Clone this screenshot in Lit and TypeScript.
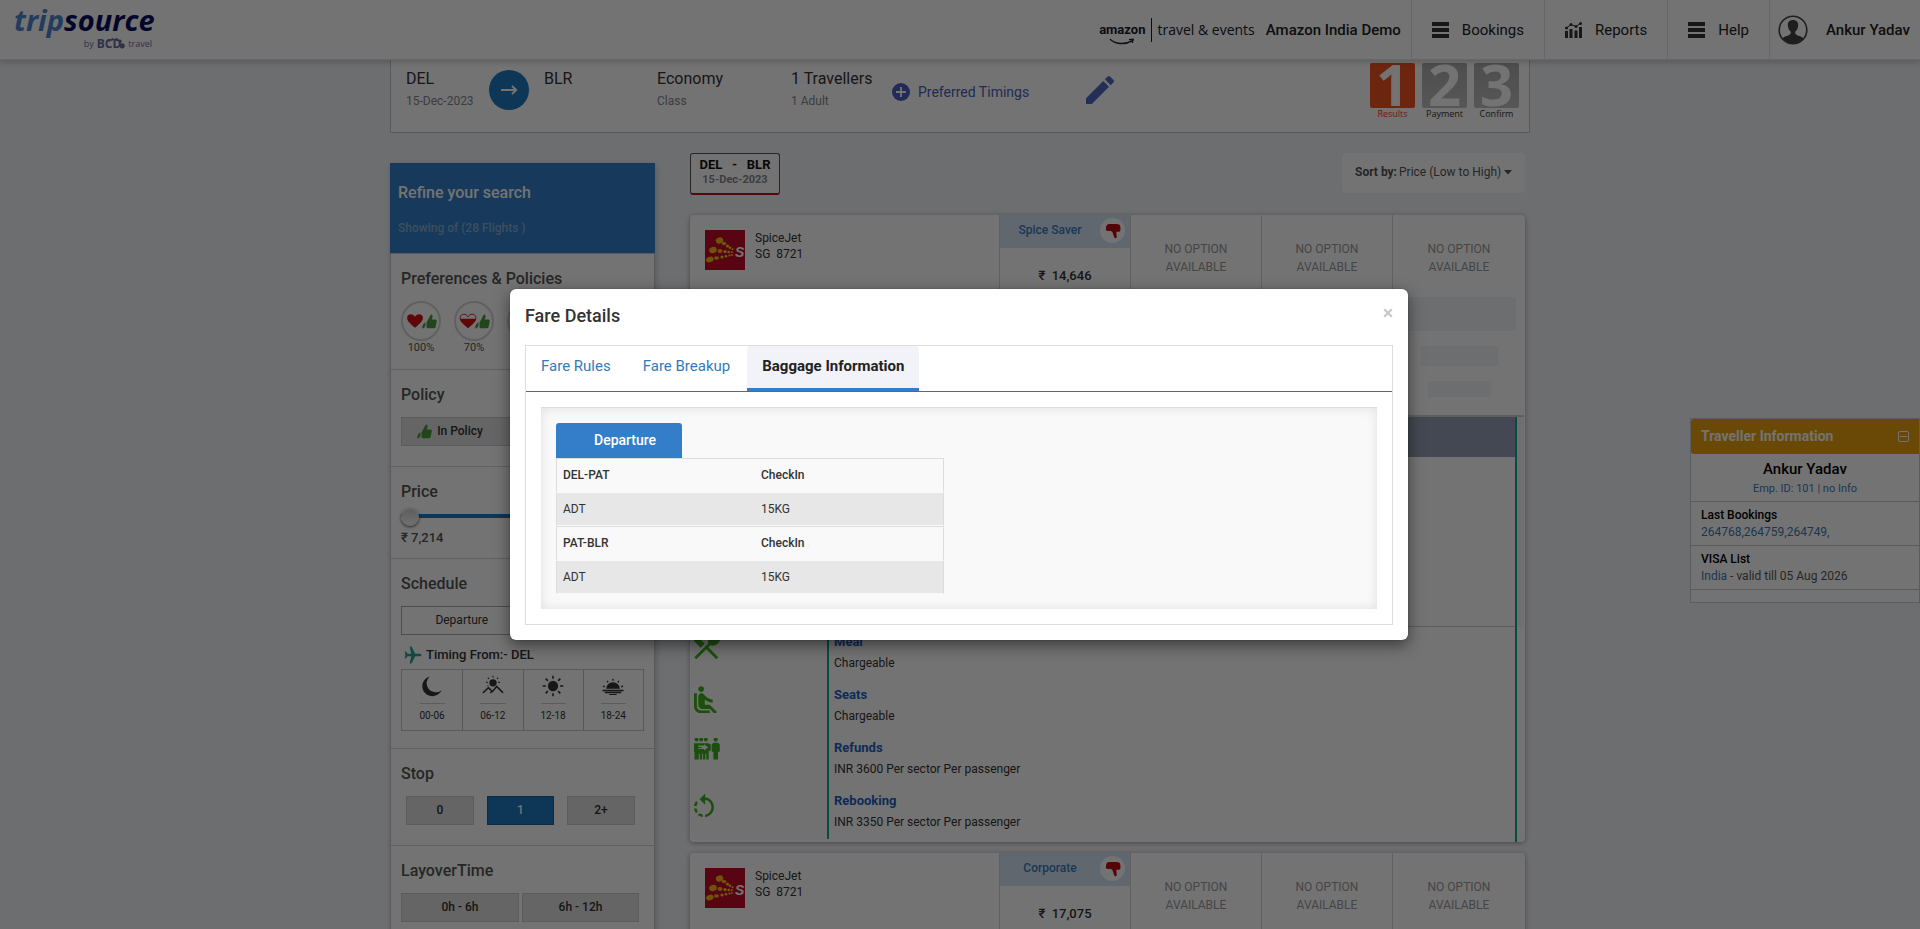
import { LitElement, html, css, svg, nothing } from "lit";
import { customElement, state } from "lit/decorators.js";
import { classMap } from "lit/directives/class-map.js";

const thumbShape = svg`
  <path d="M9 11.5 13 4q.8-2.8 2.6-2 1.600.8 1 3.400L15.400 9H21q1.900.3 1.700 2L21 19.500q-.5 2-2.500 2H11q-2 0-3-1.200V13z"/>
  <path d="M6.500 13q-4.500 2.200-4.800 8.500h3.200q-.6-2.200 1.600-3.200z"/>`;

const thumbUp = html`<svg class="ic" viewBox="1.5 1.5 21.500 20.500" aria-hidden="true">${thumbShape}</svg>`;
const thumbDown = html`<svg class="ic" viewBox="0 0 24 24" aria-hidden="true">
  <path d="M4 3.500Q5 2.500 8 2.500h8q3.500 0 5 1.500.9 1 .9 4v3q-.2 1.600-2 2h-3.500l.6 6.500q-.2 2.300-2.200 2-1.300-.3-1.800-2.800L11.500 14 9 11.500Q4.500 12.500 2.500 11 1.800 7 4 3.500z"/>
</svg>`;

const heartPath = "M12 21C5 15.500 1.500 12 1.500 7.800 1.500 4.800 3.800 3 6.500 3 9 3 11 4.300 12 6.500 13 4.300 15 3 17.500 3c2.700 0 5 1.800 5 4.800C22.500 12 19 15.500 12 21z";
const heartFull = html`<svg class="heart" viewBox="0 0 24 24" aria-hidden="true"><path d=${heartPath}/></svg>`;
const heartPart = html`<svg class="heart" viewBox="0 0 24 24" aria-hidden="true">
  <path d=${heartPath} fill="none" stroke="currentColor" stroke-width="1.200"/>
  <path d="M1.500 9h21C22 13 18 16.500 12 21 6 16.500 2 13 1.500 9z"/>
</svg>`;

const bars = html`<svg class="nav-ic" viewBox="0 0 17 16" aria-hidden="true">
  <path d="M0 0h17v4H0zM0 6h17v4H0zM0 12h17v4H0z"/></svg>`;
const chart = html`<svg class="nav-ic" viewBox="0 0 17 16" aria-hidden="true">
  <path d="M0 9h3v7H0zM4.500 7h3v9h-3zM9.500 8.500h3V16h-3zM14 5h3v11h-3z"/>
  <path d="M1.500 6 6 2.500l5 2L15.500 1.200" fill="none" stroke="currentColor"/>
  <circle cx="1.500" cy="6" r="1.500"/><circle cx="6" cy="2.600" r="1.500"/><circle cx="11" cy="4.600" r="1.500"/><circle cx="15.500" cy="1.500" r="1.500"/>
</svg>`;
const avatar = html`<svg class="avatar" viewBox="0 0 30 30" aria-hidden="true">
  <defs><clipPath id="face"><circle cx="15" cy="15" r="13.500"/></clipPath></defs>
  <circle cx="15" cy="15" r="13.800" fill="none" stroke="currentColor" stroke-width="1.600"/>
  <g clip-path="url(#face)"><path d="M15 5c-3.600 0-5.400 2.400-5.200 5.600.2 2.800 1.400 5 3 6.200 0 2-.3 2.600-2 3.400-3 1.200-6.500 2-7.800 5V30h24v-4.800c-1.300-3-4.800-3.800-7.800-5-1.700-.8-2-1.400-2-3.400 1.600-1.200 2.800-3.400 3-6.200C20.400 7.400 18.600 5 15 5z"/></g>
</svg>`;

const pencil = html`<svg class="pencil" viewBox="3 3 18 18" aria-hidden="true">
  <path d="M3 17.250V21h3.750L17.810 9.940l-3.750-3.750L3 17.250zM20.710 7.040c.39-.39.39-1.020 0-1.410l-2.340-2.340c-.39-.39-1.020-.39-1.410 0l-1.830 1.830 3.750 3.750 1.830-1.830z"/></svg>`;

const plane = html`<svg class="plane" viewBox="0 0 18 18" aria-hidden="true">
  <path d="M17.500 9c0 .9-1 1.300-2 1.300h-4.300L7.500 17.500H5.600l1.700-7.200H3.600L2 12.500H.7L1.400 9 .7 5.500H2l1.600 2.200h3.700L5.600.5h1.900l3.700 7.200h4.300c1 0 2 .4 2 1.300z"/></svg>`;

const moon = svg`<path d="M9.500 1.500A9 9 0 0 0 22.500 16.500 11 11 0 1 1 9.500 1.500z"/>`;
const mountain = svg`<circle cx="12" cy="8.500" r="4"/>
  <path d="M12 .8v2M6.300 3l1.300 1.300M17.700 3l-1.300 1.300M4.500 8h1.800M17.700 8h1.800M6 12.300l1-.6" fill="none" stroke="currentColor" stroke-width="1.200"/>
  <path d="M1 19.500 7 14l4.500 4 4.500-5.500 7 7M9 19.500l2.500-2" fill="none" stroke="currentColor" stroke-width="1.600"/>`;
const sun = svg`<circle cx="12" cy="12" r="5.600"/>
  <path d="M12 .8v3.400M12 19.800v3.400M.8 12h3.400M19.800 12h3.400M4 4l2.400 2.400M17.600 17.600 20 20M20 4l-2.400 2.400M6.400 17.600 4 20" fill="none" stroke="currentColor" stroke-width="1.700"/>`;
const sunset = svg`<path d="M4.500 15a7.500 7 0 0 1 15 0zM.5 16.200h23v1.400H.5zM3 18.400h18v1.400H3zM8 20.600h8v1.200H8z"/>
  <path d="M12 4v2.200M5.500 6.500l1.300 1.500M18.500 6.500 17.200 8M1 12.200l2 .6M23 12.200l-2 .6" fill="none" stroke="currentColor" stroke-width="1.500"/>`;

const spicejet = html`<svg class="airline" viewBox="0 0 40 40" role="img" aria-label="SpiceJet">
  <rect width="40" height="40" fill="#c30c2c"/>
  <g fill="#f9b517">
    <ellipse cx="14.500" cy="10.500" rx="3.800" ry="3" transform="rotate(-25 14.500 10.500)"/>
    <ellipse cx="8" cy="20" rx="3.900" ry="3.100" transform="rotate(-15 8 20)"/>
    <ellipse cx="4.800" cy="29.500" rx="3.900" ry="2.700" transform="rotate(-20 4.800 29.500)"/>
    <ellipse cx="19" cy="13.500" rx="2.300" ry="1.800"/><ellipse cx="15" cy="21" rx="2.500" ry="1.900"/><ellipse cx="11.500" cy="28" rx="2.500" ry="1.700"/>
  </g>
  <g fill="#f5d51a">
    <circle cx="22.500" cy="16" r="1.600"/><circle cx="25" cy="17.800" r="1.300"/><circle cx="27.500" cy="19.300" r="1"/>
    <circle cx="20" cy="21.600" r="1.600"/><circle cx="23.700" cy="22" r="1.300"/><circle cx="26.800" cy="22.200" r="1"/>
    <circle cx="17" cy="27" r="1.500"/><circle cx="21" cy="26.200" r="1.300"/><circle cx="24.500" cy="25.500" r="1.100"/><circle cx="27" cy="25" r=".9"/>
  </g>
  <text x="30" y="27" class="s-mark">S</text>
</svg>`;

const meal = svg`<path d="M8.100 13.340l2.830-2.830L3.910 3.500c-1.560 1.560-1.560 4.090 0 5.660l4.190 4.180zm6.780-1.810c1.530.71 3.680.21 5.270-1.380 1.910-1.910 2.280-4.650.81-6.120-1.460-1.460-4.200-1.100-6.120.81-1.590 1.590-2.090 3.740-1.380 5.270L3.700 19.870l1.410 1.410L12 14.410l6.880 6.880 1.410-1.410L13.410 13l1.470-1.470z"/>`;
const seat = svg`<path d="M7.590 5.410c-.78-.78-.78-2.050 0-2.830.78-.78 2.050-.78 2.830 0 .78.78.78 2.050 0 2.830-.79.79-2.050.79-2.830 0zM6 16V7H4v9c0 2.760 2.240 5 5 5h6v-2H9c-1.660 0-3-1.340-3-3zm14 4.070L14.930 15H11.500v-3.680c1.400 1.150 3.600 2.160 5.500 2.160v-2.160c-1.660.02-3.610-.87-4.670-2.040l-1.400-1.550c-.19-.21-.43-.38-.69-.5-.29-.14-.62-.23-.96-.23h-.03C8.010 7 7 8.010 7 9.250V15c0 1.660 1.340 3 3 3h5.070l3.500 3.500L20 20.070z"/>`;
const refund = svg`<circle cx="3" cy="3.800" r="1.700"/><circle cx="7" cy="3.800" r="1.700"/><circle cx="11" cy="3.800" r="1.700"/><circle cx="19.500" cy="3.800" r="1.800"/>
  <path d="M.8 7h12.400l2 1v5l-1.800 1V21h-2v-5h-.8v5h-2v-5h-.8v5h-2v-5H5v5H1.200v-6.500l-.4-.8z"/>
  <path d="M4.500 9h5V7.800l3.500 2.700-3.500 2.700V12h-5v-1h3v-.8h-3z" fill="#fafafa"/>
  <path d="M17.500 6.500h4L23 8v6l-1.500.5V21h-4v-6.500L16 14V8z"/>`;
const rotate = svg`<path d="M7.110 8.530L5.700 7.110C4.800 8.270 4.240 9.610 4.070 11h2.020c.14-.87.49-1.720 1.020-2.470zM6.090 13H4.070c.17 1.390.72 2.730 1.620 3.890l1.410-1.420c-.52-.75-.87-1.590-1.010-2.470zm1.010 5.320c1.160.9 2.510 1.440 3.900 1.610V17.900c-.87-.15-1.710-.49-2.460-1.030L7.100 18.320zM13 4.070V1L8.450 5.550 13 10V6.090c2.840.48 5 2.940 5 5.910s-2.160 5.430-5 5.910v2.020c3.950-.49 7-3.850 7-7.930s-3.050-7.440-7-7.930z"/>`;

const reset = css`
  *, *::before, *::after { box-sizing: border-box; }
  button, input, select { font: inherit; color: inherit; margin: 0; border-radius: 0; }
  button { padding: 0; border: 0; background: none; cursor: pointer; }
  a { color: inherit; text-decoration: none; }
  h1, h2, h3, h4, p, ul, dl, dd { margin: 0; padding: 0; }
  svg { display: block; fill: currentColor; }
`;

@customElement("site-header")
export class SiteHeader extends LitElement {
  static styles = [reset, css`
    :host { display: flex; align-items: stretch; height: 60px; flex: none; position: relative; z-index: 2;
      background: #fff; border-bottom: 1px solid #e4e5ea; box-shadow: 0 2px 6px rgba(0,0,0,.2); color: #222; font-size: 15px; }
    .logo { margin: 2px auto 0 14px; display: flex; flex-direction: column; width: 142px; font-family: "Open Sans", sans-serif; }
    .word { font-size: 29px; line-height: 36px; font-style: italic; font-weight: 700; color: #080d5c; }
    .word span { color: #4b86cf; }
    .by { display: flex; justify-content: flex-end; align-items: center; gap: 3px; padding-right: 4px; font-size: 9px; line-height: 12px; color: #6a6aa0; }
    .by b { font-size: 12px; }
    .by svg { width: 18px; height: 12px; margin-left: -17px; }
    .partner { display: flex; align-items: center; gap: 6px; margin-right: 11px; color: #17202b; }
    .amazon { display: flex; flex-direction: column; font-weight: 700; font-size: 13px; line-height: 16px; padding-top: 8px; }
    .amazon svg { width: 26px; height: 7px; margin: 0 auto; fill: none; stroke: currentColor; }
    .te { border-left: 1px solid #17202b; padding-left: 5px; font-family: "Open Sans", sans-serif; font-size: 14px; line-height: 24px; }
    .company { display: flex; align-items: center; padding-right: 10px; font-size: 15px; font-weight: 500; }
    nav { display: flex; }
    .item { display: flex; align-items: center; gap: 13px; padding: 0 20px; border-left: 1px solid #e2e2e2; }
    .nav-ic { width: 17px; height: 16px; color: #333; }
    .user { display: flex; align-items: center; gap: 18px; padding: 0 10px 0 8px; border-left: 1px solid #e2e2e2; font-weight: 500; }
    .avatar { width: 30px; height: 30px; color: #444; }
  `];
  render() {
    return html`
      <a class="logo" href="#" aria-label="tripsource by BCD travel">
        <span class="word"><span>trip</span>source</span>
        <span class="by">by <b>BCD</b><svg viewBox="0 0 18 12"><circle cx="2" cy="2.800" r="1.100"/><circle cx="5.500" cy="1.300" r="1.200"/><circle cx="9.500" cy="1.400" r="1.400"/><circle cx="13" cy="3.200" r="1.600"/><circle cx="15.200" cy="7.800" r="2.600"/></svg>travel</span>
      </a>
      <div class="partner">
        <span class="amazon">amazon<svg viewBox="0 0 28 7"><path d="M1 1c7 6 17 6 24 1.500M21.500 1.500 26 1l-1 4" stroke-width="1.500"/></svg></span>
        <span class="te">travel &amp; events</span>
      </div>
      <div class="company">Amazon India Demo</div>
      <nav>
        <a class="item" href="#">${bars}Bookings</a>
        <a class="item" href="#">${chart}Reports</a>
        <a class="item" href="#">${bars}Help</a>
        <a class="user" href="#">${avatar}Ankur Yadav</a>
      </nav>`;
  }
}

@customElement("search-summary")
export class SearchSummary extends LitElement {
  static styles = [reset, css`
    :host { display: flex; height: 73px; padding: 0 10px 0 15px; background: #fff; border: 1px solid #c4c5c9; border-top: 0; color: #333; }
    .cell { display: flex; flex-direction: column; gap: 4px; padding-top: 9px; }
    .cell b { font-weight: 400; font-size: 16px; line-height: 20px; }
    .cell span { font-size: 12px; line-height: 16px; color: #888; }
    .from { width: 83px; } .to { width: 113px; } .cabin { width: 134px; } .pax { width: 101px; }
    .go { width: 40px; height: 40px; margin: 10px 15px 0 0; border-radius: 50%; background: #2079be; color: #fff; display: grid; place-items: center; }
    .go svg { width: 18px; height: 12px; }
    .timings { display: flex; align-items: center; gap: 8px; height: 20px; margin: 22px 57px 0 0; color: #4a60bd; font-size: 14px; }
    .timings svg { width: 18px; height: 18px; }
    .edit { height: 30px; margin-top: 15px; color: #5068c2; }
    .pencil { width: 28px; height: 28px; }
    ol { display: flex; gap: 7px; list-style: none; margin: 3px 0 0 auto; padding: 0; font-family: "Open Sans", sans-serif; }
    li { width: 45px; display: flex; flex-direction: column; align-items: center; font-size: 9px; line-height: 12px; color: #333; }
    .num { align-self: stretch; height: 45px; overflow: hidden; border-radius: 2px; background: linear-gradient(#acacac, #c0c0c0); color: #fff; font-size: 58px; line-height: 41px; font-weight: 700; text-align: center; }
    .on { color: #e8401c; }
    .on .num { background: #f0531f; }
  `];
  render() {
    return html`
      <div class="cell from"><b>DEL</b><span>15-Dec-2023</span></div>
      <div class="go"><svg viewBox="0 0 18 12"><path d="M1 6h15M12 2l4.200 4L12 10" fill="none" stroke="currentColor" stroke-width="2"/></svg></div>
      <div class="cell to"><b>BLR</b></div>
      <div class="cell cabin"><b>Economy</b><span>Class</span></div>
      <div class="cell pax"><b>1 Travellers</b><span>1 Adult</span></div>
      <button class="timings"><svg viewBox="0 0 18 18"><circle cx="9" cy="9" r="9"/><path d="M9 4v10M4 9h10" stroke="#fff" stroke-width="1.800"/></svg>Preferred Timings</button>
      <button class="edit" aria-label="Edit search">${pencil}</button>
      <ol>
        ${["Results", "Payment", "Confirm"].map((name, i) => html`
          <li class=${classMap({ on: i === 0 })}><span class="num">${i + 1}</span>${name}</li>`)}
      </ol>`;
  }
}

@customElement("filter-panel")
export class FilterPanel extends LitElement {
  @state() stop = "1";
  static styles = [reset, css`
    :host { display: block; width: 265px; flex: none; color: #555; font-size: 12px; box-shadow: 1px 2px 6px rgba(0,0,0,.2); }
    .head { height: 90px; padding: 20px 8px 0; background: #347ec9; color: #fff; }
    .head h2 { font-size: 16px; line-height: 20px; font-weight: 500; }
    .head p { margin-top: 17px; line-height: 16px; font-weight: 500; color: #85b0d5; }
    .body { background: #fff; border: 1px solid #c9cacf; }
    section { padding: 15px 10px 20px; border-bottom: 1px solid #d6d6d6; }
    h3 { font-size: 16px; line-height: 20px; font-weight: 500; margin-bottom: 12px; color: #555; }
    .prefs { display: flex; gap: 13px; margin-bottom: -6px; }
    .pref { display: flex; flex-direction: column; align-items: center; font-size: 11px; line-height: 14px; }
    .ring { width: 40px; height: 40px; border: 2px solid #d5d5d5; border-radius: 50%; display: flex; align-items: center; justify-content: center; }
    .heart { width: 18px; height: 18px; color: #d40f14; }
    .pref .ic { margin-left: -2px; }
    .ic { width: 15px; height: 15px; color: #4f9a3c; }
    .box { display: flex; align-items: center; justify-content: center; gap: 5px; height: 29px; padding-bottom: 1px; background: #dfdfdf; border: 1px solid #ccc; color: #333; font-weight: 500; }
    .inpolicy { width: 118px; padding-right: 20px; }
    .price { padding-bottom: 10px; }
    .price h3 { margin-bottom: 6px; }
    input[type=range] { appearance: none; display: block; width: 100%; height: 18px; background: linear-gradient(#2079be, #2079be) 0 6px / 100% 4px no-repeat; }
    input::-webkit-slider-thumb { appearance: none; width: 18px; height: 18px; border-radius: 50%; background: linear-gradient(#cfcfcf, #f8f8f8); border: 1px solid #eee; box-shadow: 0 1px 3px rgba(0,0,0,.7); }
    .price output { display: block; margin-top: 2px; font-size: 13px; line-height: 20px; font-weight: 500; }
    .sched { padding-bottom: 17px; }
    .dirs { display: grid; grid-template-columns: 1fr 1fr; }
    .dirs .box { background: none; border-color: #aaa; font-weight: 400; }
    .dirs .box + .box { border-left: 0; }
    .timing { display: flex; align-items: center; gap: 4px; margin: 10px 0 4px 3px; font-size: 13px; line-height: 20px; font-weight: 500; color: #333; }
    .plane { width: 18px; height: 18px; color: #2ba195; }
    .slots { display: grid; grid-template-columns: repeat(4, 1fr); height: 62px; border: 1px solid #c8c8c8; }
    .slot { display: flex; flex-direction: column; align-items: center; padding-top: 5px; font-size: 10px; line-height: 12px; color: #333; }
    .slot + .slot { border-left: 1px solid #c0c0c0; }
    .slot svg { width: 22px; height: 22px; }
    .slot span { margin-top: 6px; padding-top: 6px; border-top: 1px solid #ccc; }
    .stops { display: grid; grid-template-columns: 68px 67px 68px; gap: 13px; margin-left: 5px; }
    .stops .on { background: #2079be; border-color: #17639e; color: #fff; }
    .lay { display: grid; grid-template-columns: 118px 117px; gap: 3px; }
  `];
  render() {
    const slots: [unknown, string][] = [[moon, "00-06"], [mountain, "06-12"], [sun, "12-18"], [sunset, "18-24"]];
    return html`
      <div class="head"><h2>Refine your search</h2><p>Showing of (28 Flights )</p></div>
      <div class="body">
        <section>
          <h3>Preferences &amp; Policies</h3>
          <div class="prefs">
            <button class="pref"><span class="ring">${heartFull}${thumbUp}</span>100%</button>
            <button class="pref"><span class="ring">${heartPart}${thumbUp}</span>70%</button>
            <button class="pref" aria-label="Other preference"><span class="ring"></span></button>
          </div>
        </section>
        <section><h3>Policy</h3><button class="box inpolicy">${thumbUp}In Policy</button></section>
        <section class="price">
          <h3 id="price">Price</h3>
          <input type="range" min="7214" max="60000" value="7214" aria-labelledby="price">
          <output>₹ 7,214</output>
        </section>
        <section class="sched">
          <h3>Schedule</h3>
          <div class="dirs"><button class="box">Departure</button><button class="box" aria-label="Arrival"></button></div>
          <div class="timing">${plane}Timing From:- DEL</div>
          <div class="slots">
            ${slots.map(([shape, label]) => html`<button class="slot"><svg viewBox="0 0 24 24" aria-hidden="true">${shape}</svg><span>${label}</span></button>`)}
          </div>
        </section>
        <section>
          <h3>Stop</h3>
          <div class="stops">
            ${["0", "1", "2+"].map((s) => html`<button class=${classMap({ box: true, on: s === this.stop })} @click=${() => (this.stop = s)}>${s}</button>`)}
          </div>
        </section>
        <section>
          <h3>LayoverTime</h3>
          <div class="lay"><button class="box">0h - 6h</button><button class="box">6h - 12h</button></div>
        </section>
      </div>`;
  }
}

@customElement("flight-results")
export class FlightResults extends LitElement {
  static styles = [reset, css`
    :host { display: flex; flex-direction: column; flex: 1; min-width: 0; padding: 20px 5px 0 0; font-size: 12px; color: #333; }
    .tools { display: flex; justify-content: space-between; align-items: flex-start; margin-bottom: 20px; }
    .leg { width: 90px; height: 42px; padding-top: 3px; background: #fff; border: 1px solid #555; border-bottom: 2px solid #c0101a; border-radius: 3px; text-align: center; line-height: 16px; }
    .leg b { display: block; font-size: 13px; font-weight: 700; white-space: pre; color: #111; }
    .leg span { display: block; font-size: 11px; line-height: 14px; font-weight: 700; color: #888; }
    .sort { display: flex; align-items: center; gap: 2px; height: 40px; padding: 0 13px 2px; background: #fff; border-radius: 4px; color: #555; }
    .sort label { font-weight: 700; }
    .sort select { appearance: none; border: 0; padding: 0; background: none; }
    .sort svg { width: 8px; height: 5px; }
    .card { background: #fff; border-radius: 4px; box-shadow: 0 1px 5px rgba(0,0,0,.35); }
    .card.open { margin-bottom: 11px; }
    .top { display: grid; grid-template-columns: 309px repeat(3, 131px) 1fr; height: 200px; }
    .carrier { display: flex; gap: 10px; padding: 15px; line-height: 16px; }
    .carrier p { white-space: pre; }
    .airline { width: 40px; height: 40px; }
    .s-mark { fill: #fff; font: italic 700 14px "Liberation Sans", sans-serif; }
    .col { border-left: 1px solid #d8d8d8; text-align: center; }
    .fare { display: flex; align-items: center; height: 33px; padding: 0 5px 4px 0; background: #d6e4f7; color: #3a7cc0; font-weight: 500; }
    .fare span { flex: 1; }
    .bad { width: 25px; height: 25px; margin-top: 2px; border-radius: 50%; background: #fff; display: grid; place-items: center; color: #b80d12; }
    .bad svg { width: 18px; height: 18px; }
    .amount { padding-top: 18px; font-size: 13px; line-height: 20px; font-weight: 500; white-space: pre; }
    .none { padding-top: 25px; line-height: 18px; color: #999; }
    .none p { width: 70px; margin: 0 auto 21px; }
    .ph { margin: 0 auto; background: #f2f3f7; }
    .p1 { width: 114px; height: 34px; border-radius: 4px; margin-bottom: 15px; }
    .p2 { width: 77px; height: 20px; margin-bottom: 15px; }
    .p3 { width: 63px; height: 16px; }
    .details { margin: 0 1px; border-top: 2px solid #d0d0d0; display: grid; grid-template-columns: 1fr 7px; height: 427px; }
    .rows { border-right: 2px solid #14a497; }
    .band, .blank, .row { display: grid; grid-template-columns: 136px 1fr; }
    .band { height: 40px; }
    .band span:last-child { background: #97a0b5; }
    .blank { height: 170px; border-bottom: 1px solid #ccc; }
    .row { height: 53px; }
    .rows div > :first-child { background: #fafafa; }
    .rows div > :last-child { border-left: 2px solid #14a497; }
    .mark { color: #3cb01e; padding: 5px 0 0 3px; }
    .mark svg { width: 26px; height: 28px; }
    .info { padding: 5px 0 0 5px; display: flex; flex-direction: column; gap: 1px; line-height: 20px; }
    .info h4 { font-size: 13px; font-weight: 700; color: #1c5fc2; }
    .side { background: #f7f7f7; height: 210px; }
  `];
  private top(fare: string, amount: string) {
    return html`<div class="top">
      <div class="carrier">${spicejet}<p>SpiceJet<br>SG  8721</p></div>
      <div class="col"><div class="fare"><span>${fare}</span><div class="bad">${thumbDown}</div></div><p class="amount">₹  ${amount}</p></div>
      ${[0, 1, 2].map(() => html`<div class="col none"><p>NO OPTION AVAILABLE</p><div class="ph p1"></div><div class="ph p2"></div><div class="ph p3"></div></div>`)}
    </div>`;
  }
  render() {
    const rules: [unknown, string, string, string][] = [
      [meal, "3.5 2.6 18 19", "Meal", "Chargeable"],
      [seat, "4 1.200 16 19.500", "Seats", "Chargeable"],
      [refund, "0.8 3.500 22.400 22", "Refunds", "INR 3600 Per sector Per passenger"],
      [rotate, "4 -1 20 22.500", "Rebooking", "INR 3350 Per sector Per passenger"]];
    return html`
      <div class="tools">
        <div class="leg"><b>DEL   -   BLR</b><span>15-Dec-2023</span></div>
        <div class="sort"><label for="sort">Sort by:</label>
          <select id="sort"><option>Price (Low to High)</option></select>
          <svg viewBox="0 0 8 5"><path d="M0 0h8L4 4.500z"/></svg></div>
      </div>
      <article class="card open">
        ${this.top("Spice Saver", "14,646")}
        <div class="details">
          <div class="rows">
            <div class="band"><span></span><span></span></div>
            <div class="blank"><span></span><span></span></div>
            ${rules.map(([shape, box, name, text]) => html`<div class="row">
              <span class="mark"><svg viewBox=${box} preserveAspectRatio="xMinYMid" aria-hidden="true">${shape}</svg></span>
              <section class="info"><h4>${name}</h4><p>${text}</p></section></div>`)}
          </div>
          <div class="side"></div>
        </div>
      </article>
      <article class="card">${this.top("Corporate", "17,075")}</article>`;
  }
}

@customElement("traveller-info")
export class TravellerInfo extends LitElement {
  @state() open = true;
  static styles = [reset, css`
    :host { display: block; width: 230px; background: #fff; border: 1px solid #ccc; font-size: 12px; line-height: 17px; color: #555; }
    header { display: flex; justify-content: space-between; align-items: center; height: 35px; padding: 0 10px; background: #e8a20c; border-radius: 3px 0 0 3px; color: #fff; }
    header h2 { font-size: 14px; font-weight: 700; }
    header button { width: 11px; height: 11px; margin-bottom: 1px; border: 1px solid #fff; border-radius: 2px; display: grid; place-items: center; }
    header i { width: 7px; height: 1px; background: #fff; }
    .who, .line { padding: 5px 10px 0; border-bottom: 1px solid #ccc; }
    .who { text-align: center; height: 48px; padding-top: 6px; font-size: 11px; color: #3f79b5; }
    .who b { display: block; margin-bottom: 3px; font-size: 15px; line-height: 18px; font-weight: 500; color: #000; }
    .who span { display: block; line-height: 16px; }
    .line { height: 44px; }
    .line b { display: block; font-weight: 500; color: #000; }
    .line a { color: #3f79b5; }
    .foot { height: 12px; }
  `];
  render() {
    return html`
      <header><h2>Traveller Information</h2><button aria-label="Collapse" @click=${() => (this.open = !this.open)}><i></i></button></header>
      ${this.open ? html`
        <div class="who"><b>Ankur Yadav</b><span>Emp. ID: 101 | no Info</span></div>
        <div class="line"><b>Last Bookings</b><a href="#">264768,264759,264749,</a></div>
        <div class="line"><b>VISA List</b><a href="#">India</a> - valid till 05 Aug 2026</div>
        <div class="foot"></div>` : nothing}`;
  }
}

@customElement("fare-dialog")
export class FareDialog extends LitElement {
  @state() tab = 2;
  static styles = [reset, css`
    :host { display: flex; justify-content: center; align-items: flex-start; padding: 289px 2px 0 0; background: rgba(0,0,0,.55); }
    .modal { width: 898px; max-width: 100%; padding: 0 15px 15px; background: #fff; border-radius: 6px; box-shadow: 0 5px 15px rgba(0,0,0,.5), 0 0 1px rgba(0,0,0,.6); color: #333; }
    header { display: flex; justify-content: space-between; align-items: center; height: 56px; padding-bottom: 3px; }
    h1 { font-size: 18px; line-height: 24px; font-weight: 500; }
    .close { width: 10px; height: 10px; color: #c8c8c8; margin: 0 0 6px; }
    .frame { border: 1px solid #ddd; }
    .tabs { display: flex; gap: 2px; height: 46px; border-bottom: 1px solid #666; font-size: 15px; }
    .tabs button { height: 45px; padding: 0 15px 6px; color: #347ab9; border-radius: 4px 4px 0 0; line-height: 20px; }
    .tabs .on { background: #f2f3f8; border-bottom: 3px solid #347ec9; padding-bottom: 3px; font-weight: 700; color: #222; }
    .pane { margin: 15px; padding: 15px; border-top: 1px solid #ddd; background: #f9f9f9; box-shadow: inset 0 0 12px rgba(0,0,0,.1); }
    .dir { display: block; height: 35px; padding: 0 26px 2px 38px; background: #347ec9; border-radius: 3px 3px 0 0; color: #fff; font-size: 14px; font-weight: 500; }
    table { width: 388px; table-layout: fixed; border-collapse: separate; border-spacing: 0; font-size: 12px; }
    tr > * { height: 34px; padding: 0 6px; text-align: left; font-weight: 400; border-bottom: 2px solid #f9f9f9; }
    tr > :first-child { border-left: 1px solid #ddd; width: 199px; }
    tr > :last-child { border-right: 1px solid #ddd; }
    .sector > * { font-weight: 500; border-top: 1px solid #ddd; height: 35px; }
    .fare-row > * { background: #e7e7e7; background-clip: padding-box; height: 33px; border-bottom-width: 1px; }
  `];
  render() {
    return html`
      <div class="modal" role="dialog" aria-modal="true" aria-labelledby="title">
        <header><h1 id="title">Fare Details</h1>
          <button class="close" aria-label="Close"><svg viewBox="0 0 10 10"><path d="m1.200 1.200 7.600 7.600M8.800 1.200 1.200 8.800" stroke="currentColor" stroke-width="2.200"/></svg></button>
        </header>
        <div class="frame">
          <div class="tabs" role="tablist">
            ${["Fare Rules", "Fare Breakup", "Baggage Information"].map((name, i) => html`
              <button role="tab" aria-selected=${i === this.tab} class=${classMap({ on: i === this.tab })} @click=${() => (this.tab = i)}>${name}</button>`)}
          </div>
          <div class="pane">
            <button class="dir">Departure</button>
            <table>
              ${["DEL-PAT", "PAT-BLR"].map((s) => html`
                <tr class="sector"><th scope="col">${s}</th><th scope="col">CheckIn</th></tr>
                <tr class="fare-row"><td>ADT</td><td>15KG</td></tr>`)}
            </table>
          </div>
        </div>
      </div>`;
  }
}

@customElement("app-root")
export class AppRoot extends LitElement {
  static styles = [reset, css`
    :host { display: flex; flex-direction: column; height: 100vh; overflow: hidden; position: relative; background: #f2f3f8; font-family: Roboto, "Noto Sans", sans-serif; }
    .wrap { width: 1140px; max-width: 100%; margin: 0 auto; }
    .cols { display: flex; gap: 35px; align-items: flex-start; }
    filter-panel { margin-top: 30px; }
    traveller-info { position: absolute; right: 0; top: 418px; }
    fare-dialog { position: absolute; inset: 0; z-index: 10; }
  `];
  render() {
    return html`
      <site-header></site-header>
      <main class="wrap">
        <search-summary></search-summary>
        <div class="cols"><filter-panel></filter-panel><flight-results></flight-results></div>
      </main>
      <traveller-info></traveller-info>
      <fare-dialog></fare-dialog>`;
  }
}
